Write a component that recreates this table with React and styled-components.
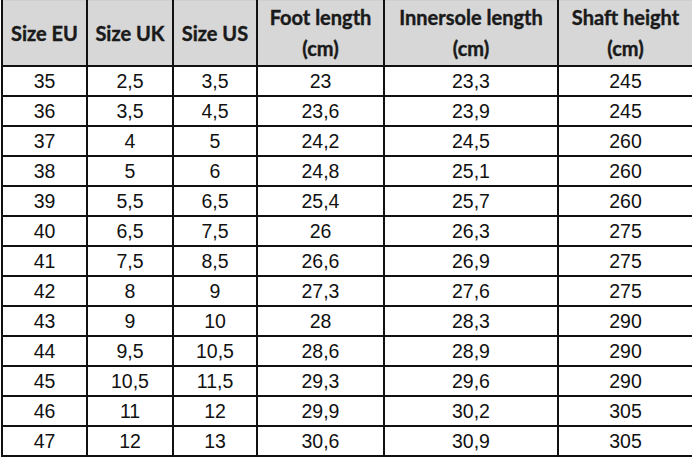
import React from 'react';
import styled, { createGlobalStyle } from 'styled-components';

const GlobalStyle = createGlobalStyle`
  html, body {
    margin: 0;
    padding: 0;
    background: #ffffff;
  }
`;

const Page = styled.div`
  padding: 0 0 0 1px;
  width: 692px;
  height: 458px;
  overflow: hidden;
  box-sizing: border-box;
`;

const Table = styled.table`
  border-collapse: collapse;
  table-layout: fixed;
  width: 691px;
  border-top: 1px solid #cfcfcf;
`;

const HeadCell = styled.th`
  background: #d7d7d7;
  height: 64px;
  padding: 0;
  border-left: 2px solid #111;
  border-right: 2px solid #111;
  border-bottom: 2px solid #111;
  font-family: Lato, "Open Sans", sans-serif;
  font-weight: 700;
  font-size: 20px;
  line-height: 31px;
  color: #1a1a1a;
  -webkit-text-stroke: 0.4px #1a1a1a;
  text-align: center;
  vertical-align: middle;
`;

const Cell = styled.td`
  height: 28px;
  padding: 0;
  border: 2px solid #111;
  font-family: "Liberation Sans", Arial, sans-serif;
  font-size: 19.5px;
  color: #111;
  text-align: center;
  vertical-align: middle;
`;

const columns = [
  { label: 'Size EU', width: 85 },
  { label: 'Size UK', width: 86 },
  { label: 'Size US', width: 84 },
  { label: ['Foot length', '(cm)'], width: 127 },
  { label: ['Innersole length', '(cm)'], width: 174 },
  { label: ['Shaft height', '(cm)'], width: 135 },
];

const rows = [
  ['35', '2,5', '3,5', '23', '23,3', '245'],
  ['36', '3,5', '4,5', '23,6', '23,9', '245'],
  ['37', '4', '5', '24,2', '24,5', '260'],
  ['38', '5', '6', '24,8', '25,1', '260'],
  ['39', '5,5', '6,5', '25,4', '25,7', '260'],
  ['40', '6,5', '7,5', '26', '26,3', '275'],
  ['41', '7,5', '8,5', '26,6', '26,9', '275'],
  ['42', '8', '9', '27,3', '27,6', '275'],
  ['43', '9', '10', '28', '28,3', '290'],
  ['44', '9,5', '10,5', '28,6', '28,9', '290'],
  ['45', '10,5', '11,5', '29,3', '29,6', '290'],
  ['46', '11', '12', '29,9', '30,2', '305'],
  ['47', '12', '13', '30,6', '30,9', '305'],
];

export default function App() {
  return (
    <>
      <GlobalStyle />
      <Page>
        <Table>
          <colgroup>
            {columns.map((c, i) => (
              <col key={i} style={{ width: c.width }} />
            ))}
          </colgroup>
          <thead>
            <tr>
              {columns.map((c, i) => (
                <HeadCell key={i}>
                  {Array.isArray(c.label) ? (
                    <>
                      {c.label[0]}
                      <br />
                      {c.label[1]}
                    </>
                  ) : (
                    c.label
                  )}
                </HeadCell>
              ))}
            </tr>
          </thead>
          <tbody>
            {rows.map((r, i) => (
              <tr key={i}>
                {r.map((v, j) => (
                  <Cell key={j}>{v}</Cell>
                ))}
              </tr>
            ))}
          </tbody>
        </Table>
      </Page>
    </>
  );
}
